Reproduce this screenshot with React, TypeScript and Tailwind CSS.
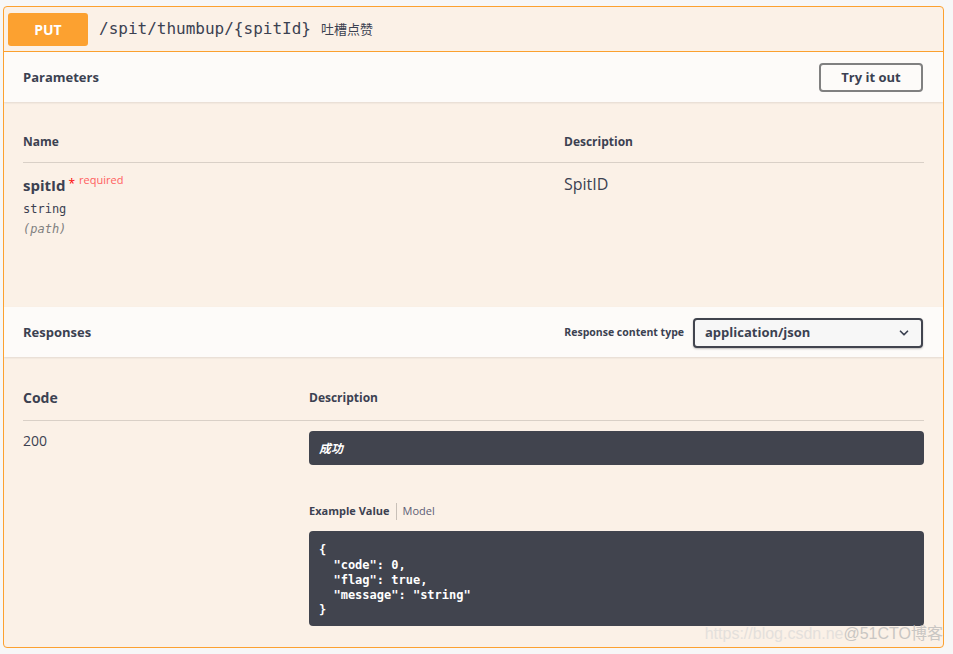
import { ChevronDown } from "lucide-react";

const sans = "font-['Open_Sans','Noto_Sans_CJK_SC',sans-serif]";
const mono = "font-['DejaVu_Sans_Mono','Noto_Sans_CJK_SC',monospace]";

export default function App() {
  return (
    <div className={`w-[953px] h-[654px] bg-[#f7f7f7] pt-[6px] pl-[3px] pr-[9px] ${sans} text-[#3b4151] relative`}>
      <div className="h-[642px] border border-[#fca130] rounded-[4px] bg-[#fbf1e7] overflow-hidden">
        {/* summary */}
        <div className="h-[45px] flex items-center px-[4px] border-b border-[#fca130]">
          <div className="w-[80px] h-[33px] bg-[#fca130] rounded-[3px] flex items-center justify-center text-white font-bold text-[14px]">
            PUT
          </div>
          <span className={`${mono} text-[16px] ml-[11px] text-[#3b4151]`}>/spit/thumbup/{"{spitId}"}</span>
          <span className="ml-[10px] text-[13px] font-['Noto_Sans_CJK_SC',sans-serif]">吐槽点赞</span>
        </div>

        {/* Parameters header */}
        <div className="h-[50px] bg-[#fdfbf9] flex items-center justify-between pl-[19px] pr-[20px] pt-[1px] shadow-[0_1px_2px_rgba(0,0,0,0.1)]">
          <span className="text-[13px] font-bold">Parameters</span>
          <button className="w-[104px] h-[29px] border-2 border-[#808080] rounded-[4px] text-[13px] font-bold bg-transparent">
            Try it out
          </button>
        </div>

        {/* Parameters table */}
        <div className="px-[19px] pt-[32px] h-[205px]">
          <div className="flex border-b border-[#d9d0c7] pb-[12px] leading-[16px] text-[12px] font-bold">
            <div className="w-[541px]">Name</div>
            <div>Description</div>
          </div>
          <div className="flex pt-[11px]">
            <div className="w-[541px]">
              <div className="flex items-start">
                <span className="text-[15px] font-bold leading-[22px]">spitId</span>
                <span className="text-[#ff0000] text-[12px] ml-[3px] mt-[1px]">*</span>
                <span className="text-[#ff6060] text-[11px] ml-[4px] leading-[14px] -mt-[1px]">required</span>
              </div>
              <div className={`${mono} text-[12px] mt-[4px] leading-[18px]`}>string</div>
              <div className={`${mono} text-[12px] italic text-[#808080] leading-[22px]`}>(path)</div>
            </div>
            <div className="text-[16px] leading-[20px]">SpitID</div>
          </div>
        </div>

        {/* Responses header */}
        <div className="h-[50px] bg-[#fdfbf9] flex items-center justify-between pl-[19px] pr-[20px] pt-[2px] shadow-[0_1px_2px_rgba(0,0,0,0.1)]">
          <span className="text-[13px] font-bold">Responses</span>
          <div className="flex items-center">
            <span className="text-[10.5px] font-bold mr-[9px]">Response content type</span>
            <div className="w-[230px] h-[30px] border-2 border-[#41444e] rounded-[4px] bg-[#f7f7f7] flex items-center justify-between px-[10px] shadow-[0_1px_2px_rgba(0,0,0,0.25)]">
              <span className="text-[13px] font-bold">application/json</span>
              <ChevronDown className="w-[14px] h-[14px] text-[#3b4151]" strokeWidth={3} />
            </div>
          </div>
        </div>

        {/* Responses table */}
        <div className="px-[19px] pt-[31px]">
          <div className="flex border-b border-[#d9d0c7] pb-[12px] items-center font-bold leading-[20px]">
            <div className="w-[286px] text-[14px]">Code</div>
            <div className="text-[12px]">Description</div>
          </div>
          <div className="flex pt-[10px]">
            <div className="w-[286px] text-[14px] leading-[20px]">200</div>
            <div className="flex-1">
              <div className="h-[34px] bg-[#41444e] rounded-[4px] flex items-center px-[10px] text-white text-[12px] font-bold italic font-['Noto_Sans_CJK_SC',sans-serif]">
                成功
              </div>
              <div className="flex items-center mt-[38px] text-[11px]">
                <span className="font-bold pr-[6px] border-r border-[#c8c0b8]">Example Value</span>
                <span className="pl-[6px] text-[#5d5d75]">Model</span>
              </div>
              <pre className={`mt-[11px] h-[95px] bg-[#41444e] rounded-[4px] text-white font-bold ${mono} text-[12px] leading-[15px] px-[10px] pt-[12px]`}>
{`{
  "code": 0,
  "flag": true,
  "message": "string"
}`}
              </pre>
            </div>
          </div>
        </div>
      </div>
      <div className="absolute right-[10px] bottom-[8px] text-[16px] text-[#e4e0dc] font-['Liberation_Sans','Noto_Sans_CJK_SC',sans-serif]">
        https://blog.csdn.ne<span className="text-[#c9c6c3]">@51CTO博客</span>
      </div>
    </div>
  );
}
